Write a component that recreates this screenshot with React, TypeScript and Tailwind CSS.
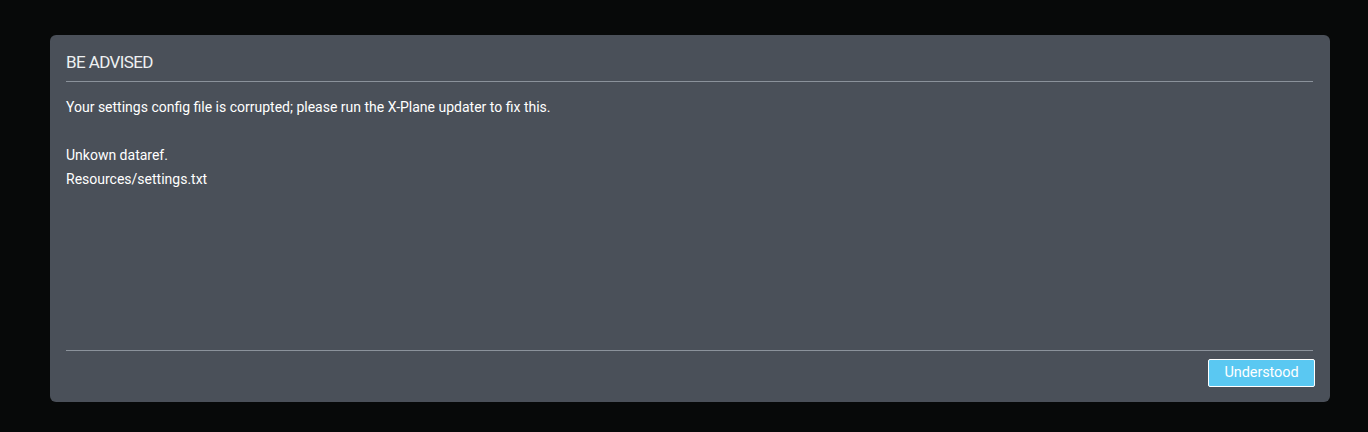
export default function App() {
  return (
    <div className="w-[1368px] h-[432px] bg-[#070909] pt-[35px] pl-[50px] pr-[38px] font-['Roboto',sans-serif]">
      {/* Dialog */}
      <div className="h-[367px] rounded-[6px] bg-[#4a5059] pl-4 pr-[17px] pt-[15px] pb-[15px] flex flex-col">
        <h2 className="text-[17px] leading-[24px] text-[#eef0f2] tracking-[-0.6px]">BE ADVISED</h2>
        <div className="mt-[7px] h-px bg-[#8b929b]" />
        <div className="mt-[13px] text-[14px] leading-[24px] text-white flex-1">
          <p>Your settings config file is corrupted; please run the X-Plane updater to fix this.</p>
          <p>&nbsp;</p>
          <p>Unkown dataref.</p>
          <p>Resources/settings.txt</p>
        </div>
        <div className="h-px bg-[#8b929b]" />
        <div className="mt-[8px] flex justify-end -mr-[2px]">
          <button className="h-[28px] w-[107px] rounded-[2px] border border-white bg-[#5ac8f2] text-[14.5px] tracking-[-0.1px] text-white">
            Understood
          </button>
        </div>
      </div>
    </div>
  );
}
